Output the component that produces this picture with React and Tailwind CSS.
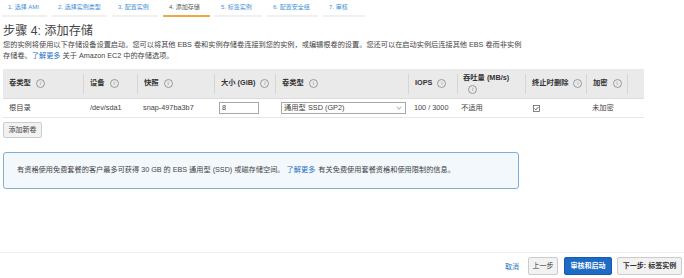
import React from "react";

const Info = () => (
  <span className="inline-flex w-[9px] h-[9px] rounded-full border border-[#999] items-center justify-center text-[5.5px] leading-none text-[#888] font-normal shrink-0">
    i
  </span>
);

const tabs = [
  { t: "1. 选择 AMI", w: "w-[45px]" },
  { t: "2. 选择实例类型", w: "w-[55px]" },
  { t: "3. 配置实例", w: "w-[46px]" },
  { t: "4. 添加存储", w: "w-[47px]", active: true },
  { t: "5. 标签实例", w: "w-[47px]" },
  { t: "6. 配置安全组", w: "w-[51px]" },
  { t: "7. 审核", w: "w-[42px]" },
];

const Sep = () => <div className="w-px h-[20px] bg-[#d6d6d6] shrink-0" />;

const HeadCell = ({ children, first }) => (
  <div className="flex items-center h-full">
    {!first && <Sep />}
    <div className="ml-[6px] flex items-center gap-[5px] whitespace-nowrap">{children}</div>
  </div>
);

export default function App() {
  return (
    <div className="w-[684px] h-[278px] bg-white flex flex-col overflow-hidden font-['Liberation_Sans','Noto_Sans_CJK_SC',sans-serif] text-[#444]">
      {/* tabs */}
      <div className="flex pl-[2px] gap-[5px] h-[18px]">
        {tabs.map((tab) => (
          <div
            key={tab.t}
            className={`${tab.w} h-[17px] pl-[6px] flex items-center text-[6px] whitespace-nowrap ${
              tab.active
                ? "border-b-2 border-[#f4a54a] text-[#555]"
                : "border-b-2 border-[#f0f0f0] text-[#3f8fd6]"
            }`}
          >
            {tab.t}
          </div>
        ))}
      </div>

      {/* title */}
      <div className="mt-[5px] pl-[3px] text-[12.2px] leading-[16px] text-[#444]">步骤 4: 添加存储</div>
      <div className="pl-[3px] text-[7.2px] leading-[11px] text-[#444] w-[540px]">
        <div className="whitespace-nowrap">
          您的实例将使用以下存储设备设置启动。您可以将其他 EBS 卷和实例存储卷连接到您的实例，或编辑根卷的设置。您还可以在启动实例后连接其他 EBS 卷而非实例
        </div>
        <div className="whitespace-nowrap">
          存储卷。<span className="text-[#1f6fc5]">了解更多</span> 关于 Amazon EC2 中的存储选项。
        </div>
      </div>

      {/* table */}
      <div className="ml-[3px] mt-[8px] w-[641px]">
        <div className="grid grid-cols-[80px_54px_77px_61px_133px_49px_68px_61px_41px_17px] h-[30px] bg-[#eaeaea] text-[7.3px] font-bold text-[#333] border-b border-[#dcdcdc]">
          <HeadCell first>
            卷类型 <Info />
          </HeadCell>
          <HeadCell>
            设备 <Info />
          </HeadCell>
          <HeadCell>
            快照 <Info />
          </HeadCell>
          <HeadCell>
            大小 (GiB) <Info />
          </HeadCell>
          <HeadCell>
            卷类型 <Info />
          </HeadCell>
          <HeadCell>
            IOPS <Info />
          </HeadCell>
          <div className="flex items-center h-full">
            <Sep />
            <div className="ml-[5px] flex flex-col gap-[1px]">
              <span className="whitespace-nowrap">吞吐量 (MB/s)</span>
              <span className="ml-[5px] flex">
                <Info />
              </span>
            </div>
          </div>
          <HeadCell>
            终止时删除 <Info />
          </HeadCell>
          <HeadCell>
            加密 <Info />
          </HeadCell>
          <div className="flex items-center h-full">
            <Sep />
          </div>
        </div>
        <div className="grid grid-cols-[80px_54px_77px_61px_133px_49px_68px_61px_41px_17px] h-[19px] items-center text-[7.3px] text-[#444] border-b border-[#e6e6e6]">
          <div className="pl-[6px]">根目录</div>
          <div className="pl-[7px]">/dev/sda1</div>
          <div className="pl-[6px]">snap-497ba3b7</div>
          <div className="pl-[5px]">
            <div className="w-[40px] h-[12px] border border-[#a9a9a9] pl-[2px] flex items-center bg-white leading-none">8</div>
          </div>
          <div className="pl-[6px]">
            <div className="w-[125px] h-[12px] border border-[#a9a9a9] pl-[2px] pr-[3px] flex items-center justify-between bg-white leading-none">
              <span>通用型 SSD (GP2)</span>
              <svg width="6" height="4" viewBox="0 0 6 4">
                <path d="M0.5 0.8 L3 3.2 L5.5 0.8" fill="none" stroke="#888" strokeWidth="0.8" />
              </svg>
            </div>
          </div>
          <div className="pl-[6px] whitespace-nowrap">100 / 3000</div>
          <div className="pl-[4px]">不适用</div>
          <div className="pl-[8px] flex">
            <svg width="7" height="7" viewBox="0 0 7 7">
              <rect x="0.5" y="0.5" width="6" height="6" fill="white" stroke="#666" strokeWidth="0.8" />
              <path d="M1.6 3.5 L2.9 4.8 L5.4 2" fill="none" stroke="#444" strokeWidth="0.9" />
            </svg>
          </div>
          <div className="pl-[6px]">未加密</div>
          <div />
        </div>
      </div>

      <div className="ml-[3px] mt-[4px] w-[39px] h-[16px] bg-[#f2f2f2] border border-[#cccccc] rounded-[2px] flex items-center justify-center text-[7px] text-[#444]">
        添加新卷
      </div>

      {/* info box */}
      <div className="ml-[3px] mt-[14px] w-[516px] h-[37px] bg-[#f3f8fd] border border-[#7eaedc] rounded-[3px] flex items-center pl-[13px] text-[7.2px] text-[#444] whitespace-nowrap">
        有资格使用免费套餐的客户最多可获得 30 GB 的 EBS 通用型 (SSD) 或磁存储空间。
        <span className="text-[#1f6fc5] ml-[2px]">了解更多</span>
        <span className="ml-[3px]">有关免费使用套餐资格和使用限制的信息。</span>
      </div>

      {/* footer */}
      <div className="mt-auto border-t border-[#eeeeee] h-[26px] flex items-start justify-end pt-[4px] pr-[2px] text-[7px]">
        <span className="text-[#1f6fc5] mt-[5px] mr-[9px]">取消</span>
        <div className="w-[30px] h-[18px] bg-[#f2f2f2] border border-[#cccccc] rounded-[2px] flex items-center justify-center text-[#333]">
          上一步
        </div>
        <div className="ml-[6px] w-[48px] h-[18px] bg-[#1d6bc4] border border-[#195ba8] rounded-[2px] flex items-center justify-center text-white font-bold">
          审核和启动
        </div>
        <div className="ml-[5px] w-[65px] h-[18px] bg-[#f2f2f2] border border-[#cccccc] rounded-[2px] flex items-center justify-center text-[#333] font-bold">
          下一步: 标签实例
        </div>
      </div>
    </div>
  );
}
